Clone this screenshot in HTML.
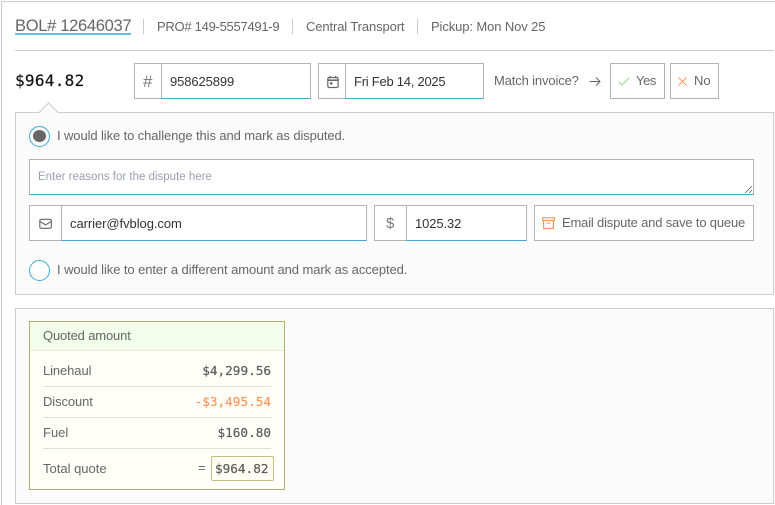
<!DOCTYPE html>
<html><head><meta charset="utf-8">
<style>
html,body{margin:0;padding:0;background:#fff}
body{position:relative;width:775px;height:505px;overflow:hidden;font-family:"Liberation Sans",sans-serif;color:#666}
div,span,svg{position:absolute;box-sizing:border-box}
.t{white-space:nowrap;font-size:13px;line-height:16px;color:#666}
.d{color:#333}
.m{font-family:"DejaVu Sans Mono","Liberation Mono",monospace;font-weight:400;font-size:12.7px;color:#5c5c5c;-webkit-text-stroke:.2px currentColor}
.box{border:1px solid #b3b3b3;background:#fff}
.add{border:1px solid #b3b3b3;background:#fff}
.inp{border:1px solid #b3b3b3;border-bottom:1px solid #3fa9d4;background:#fff}
.sep{width:1px;height:15px;background:#ccc;top:19px}
.rule{height:1px;background:#ddd;left:43px;width:228px}
</style></head><body>
<div style="left:1px;top:1px;width:774px;height:1px;background:#ccc"></div>
<div style="left:1px;top:1px;width:1px;height:504px;background:#ccc"></div>

<div class="t" style="left:15px;top:16px;font-size:16.5px;line-height:20px;letter-spacing:-.3px">BOL# 12646037</div>
<div style="left:15px;top:33px;width:116px;height:2px;background:#6cbde0"></div>
<div class="sep" style="left:143px"></div>
<div class="t" style="left:157px;top:19px;letter-spacing:-.27px">PRO# 149-5557491-9</div>
<div class="sep" style="left:292px"></div>
<div class="t" style="left:306px;top:19px;letter-spacing:-.12px">Central Transport</div>
<div class="sep" style="left:417px"></div>
<div class="t" style="left:431px;top:19px;letter-spacing:-.11px">Pickup: Mon Nov 25</div>
<div style="left:15px;top:50px;width:759px;height:1px;background:#ccc"></div>

<div class="t m" style="left:15px;top:71px;font-size:16px;line-height:20px;color:#111;letter-spacing:.3px">$964.82</div>

<div class="add" style="left:134px;top:63px;width:28px;height:36px"></div>
<div class="t" style="left:143px;top:73px;font-size:17px;line-height:18px;color:#777">#</div>
<div class="inp" style="left:161px;top:63px;width:150px;height:36px"></div>
<div class="t d" style="left:170px;top:74px;letter-spacing:-.1px">958625899</div>

<div class="add" style="left:318px;top:63px;width:28px;height:36px"></div>
<svg style="left:327px;top:75px" width="12" height="14" viewBox="0 0 12 14"><rect x=".8" y="2.5" width="10.4" height="10" rx="1.5" fill="none" stroke="#666" stroke-width="1.2"/><path d="M1 5.2h10" stroke="#666" stroke-width="1.6"/><path d="M3.3 1v2.4M8.7 1v2.4" stroke="#666" stroke-width="1.2"/><rect x="3" y="7.2" width="2.4" height="2.4" fill="#666"/></svg>
<div class="inp" style="left:345px;top:63px;width:139px;height:36px"></div>
<div class="t d" style="left:354px;top:74px;letter-spacing:-.25px">Fri Feb 14, 2025</div>

<div class="t" style="left:494px;top:73px;letter-spacing:-.14px">Match invoice?</div>
<svg style="left:588.5px;top:76.5px" width="12" height="9" viewBox="0 0 12 9"><path d="M.5 4.5H11M7 .5L11 4.5 7 8.5" fill="none" stroke="#666" stroke-width="1"/></svg>

<div class="box" style="left:610px;top:63px;width:55px;height:36px"></div>
<svg style="left:618px;top:77px" width="12" height="9" viewBox="0 0 12 9"><path d="M.5 4.5L4 8l7.5-7.5" fill="none" stroke="#a5d98c" stroke-width="1.1"/></svg>
<div class="t" style="left:636px;top:73px;letter-spacing:-.4px">Yes</div>
<div class="box" style="left:670px;top:63px;width:49px;height:36px"></div>
<svg style="left:678px;top:77px" width="9" height="9" viewBox="0 0 9 9"><path d="M.5 .5l8 8M8.5 .5l-8 8" fill="none" stroke="#ff9a5c" stroke-width="1.1"/></svg>
<div class="t" style="left:694px;top:73px">No</div>

<!-- Panel 1 -->
<div style="left:15px;top:112px;width:759px;height:183px;background:#fbfbfb;border:1px solid #ccc"></div>
<svg style="left:38px;top:102px" width="21" height="12" viewBox="0 0 21 12"><path d="M1 10.5L10.5 1 20 10.5" fill="#fbfbfb" stroke="#ccc" stroke-width="1"/><rect x="1.5" y="10" width="18" height="2" fill="#fbfbfb"/></svg>

<div style="left:29px;top:126px;width:21px;height:21px;border-radius:50%;border:1px solid #3fa9d4;background:#fbfbfb"></div>
<div style="left:33px;top:130px;width:13px;height:12px;border-radius:50%;background:#666"></div>
<div class="t" style="left:57px;top:128px;letter-spacing:-.1px">I would like to challenge this and mark as disputed.</div>

<div class="inp" style="left:29px;top:159px;width:725px;height:36px"></div>
<div class="t" style="left:38px;top:169px;font-size:11.5px;color:#9a9fae">Enter reasons for the dispute here</div>
<svg style="left:744px;top:185px" width="9" height="9" viewBox="0 0 9 9"><path d="M1 8L8 1M5 8L8 5" stroke="#666" stroke-width=".8"/></svg>

<div class="add" style="left:29px;top:205px;width:33px;height:36px"></div>
<svg style="left:39px;top:218px" width="14" height="12" viewBox="0 0 14 12"><rect x=".8" y="1.3" width="11.6" height="9" rx="1.5" fill="none" stroke="#666" stroke-width="1.1"/><path d="M1 3.5l5.6 3.4 5.6-3.4" fill="none" stroke="#666" stroke-width="1.1"/></svg>
<div class="inp" style="left:61px;top:205px;width:306px;height:36px"></div>
<div class="t d" style="left:70px;top:216px;letter-spacing:-.06px">carrier@fvblog.com</div>

<div class="add" style="left:374px;top:205px;width:33px;height:36px"></div>
<div class="t" style="left:386px;top:216px;font-size:15px;color:#777">$</div>
<div class="inp" style="left:406px;top:205px;width:121px;height:36px"></div>
<div class="t d" style="left:415px;top:216px;letter-spacing:-.1px">1025.32</div>

<div class="box" style="left:534px;top:205px;width:220px;height:36px"></div>
<svg style="left:542px;top:217px" width="13" height="13" viewBox="0 0 13 13"><rect x=".6" y=".7" width="11.8" height="2.8" fill="none" stroke="#ff9a5c" stroke-width="1.2"/><path d="M1.6 3.5v8h9.8v-8M4.7 6.2h3.6" fill="none" stroke="#ff9a5c" stroke-width="1.2"/></svg>
<div class="t" style="left:562px;top:215px;letter-spacing:-.18px">Email dispute and save to queue</div>

<div style="left:29px;top:260px;width:21px;height:21px;border-radius:50%;border:1px solid #3fa9d4;background:#fff"></div>
<div class="t" style="left:57px;top:262px;letter-spacing:-.08px">I would like to enter a different amount and mark as accepted.</div>

<!-- Panel 2 -->
<div style="left:15px;top:308px;width:759px;height:196px;background:#fbfbfb;border:1px solid #ccc"></div>
<div style="left:29px;top:321px;width:256px;height:169px;background:#fffef9;border:1px solid #b5ab70"></div>
<div style="left:30px;top:322px;width:254px;height:29px;background:#f2fdec;border-bottom:1px solid #e6ebc6"></div>
<div class="t" style="left:43px;top:328px;letter-spacing:-.15px">Quoted amount</div>

<div class="t" style="left:43px;top:363px;letter-spacing:-.1px">Linehaul</div>
<div class="t m" style="right:504px;top:363px">$4,299.56</div>
<div class="rule" style="top:386px"></div>
<div class="t" style="left:43px;top:394px;letter-spacing:-.1px">Discount</div>
<div class="t m" style="right:504px;top:394px;color:#ff9a5c">-$3,495.54</div>
<div class="rule" style="top:417px"></div>
<div class="t" style="left:43px;top:425px">Fuel</div>
<div class="t m" style="right:504px;top:425px">$160.80</div>
<div class="rule" style="top:448px"></div>
<div class="t" style="left:43px;top:461px">Total quote</div>
<div class="t" style="left:198px;top:460px">=</div>
<div style="left:211px;top:456px;width:63px;height:25px;background:#fffef4;border:1px solid #c8bd7f;border-radius:2px"></div>
<div class="t m" style="left:215px;top:461px">$964.82</div>
</body></html>
